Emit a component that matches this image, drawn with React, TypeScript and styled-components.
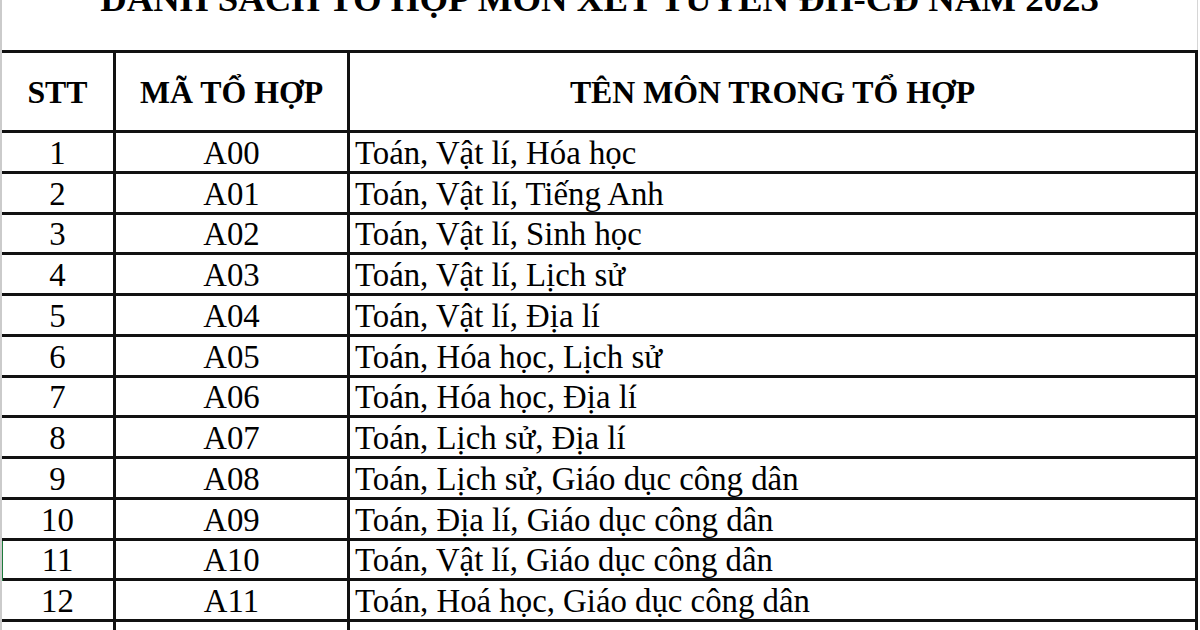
import React from 'react';
import styled, { createGlobalStyle } from 'styled-components';

const GlobalStyle = createGlobalStyle`
  html, body {
    margin: 0;
    padding: 0;
    background: #fff;
    overflow: hidden;
  }
  body {
    font-family: "Liberation Serif", "Times New Roman", "DejaVu Serif", serif;
    color: #000;
  }
`;

const Sheet = styled.div`
  position: relative;
  width: 1200px;
  height: 630px;
  overflow: hidden;
  box-sizing: border-box;
  border-left: 2px solid #cbcbcb;
  background: #fff;
`;

const TitleRow = styled.div`
  height: 50px;
  width: 1196px;
  overflow: hidden;
  box-sizing: border-box;
  border-right: 1px solid #d6d6d6;
`;

const Title = styled.h1`
  margin: -19px 0 0;
  font-size: 36.8px;
  line-height: 36px;
  font-weight: 700;
  text-align: center;
  white-space: nowrap;
`;

const Grid = styled.div`
  display: grid;
  grid-template-columns: 111px 231px 845px;
  grid-template-rows: 77px;
  grid-auto-rows: 37.75px;
  gap: 3px;
  width: 1196px;
  box-sizing: border-box;
  padding: 3px 3px 0 0;
  background: #111;
`;

const HeadCell = styled.div`
  display: flex;
  align-items: center;
  justify-content: center;
  padding-top: 2px;
  box-sizing: border-box;
  background: #fff;
  font-size: 31.8px;
  font-weight: 700;
  line-height: 1;
  white-space: nowrap;
`;

const Cell = styled.div<{ $align?: 'left' | 'center' }>`
  display: flex;
  align-items: center;
  justify-content: ${(p) => (p.$align === 'left' ? 'flex-start' : 'center')};
  padding-left: ${(p) => (p.$align === 'left' ? '5px' : '0')};
  padding-top: 3px;
  box-sizing: border-box;
  background: #fff;
  font-size: 32.8px;
  line-height: 1;
  white-space: nowrap;
`;

const SelectionMark = styled.div`
  position: absolute;
  left: -2px;
  top: 541px;
  width: 3px;
  height: 40px;
  background: #1e7b3c;
`;

const rows: [string, string][] = [
  ['A00', 'Toán, Vật lí, Hóa học'],
  ['A01', 'Toán, Vật lí, Tiếng Anh'],
  ['A02', 'Toán, Vật lí, Sinh học'],
  ['A03', 'Toán, Vật lí, Lịch sử'],
  ['A04', 'Toán, Vật lí, Địa lí'],
  ['A05', 'Toán, Hóa học, Lịch sử'],
  ['A06', 'Toán, Hóa học, Địa lí'],
  ['A07', 'Toán, Lịch sử, Địa lí'],
  ['A08', 'Toán, Lịch sử, Giáo dục công dân'],
  ['A09', 'Toán, Địa lí, Giáo dục công dân'],
  ['A10', 'Toán, Vật lí, Giáo dục công dân'],
  ['A11', 'Toán, Hoá học, Giáo dục công dân'],
];

const App: React.FC = () => {
  return (
    <>
      <GlobalStyle />
      <Sheet>
        <TitleRow>
          <Title>DANH SÁCH TỔ HỢP MÔN XÉT TUYỂN ĐH-CĐ NĂM 2023</Title>
        </TitleRow>
        <Grid>
          <HeadCell>STT</HeadCell>
          <HeadCell>MÃ TỔ HỢP</HeadCell>
          <HeadCell>TÊN MÔN TRONG TỔ HỢP</HeadCell>
          {rows.map(([code, subjects], i) => (
            <React.Fragment key={code}>
              <Cell>{i + 1}</Cell>
              <Cell>{code}</Cell>
              <Cell $align="left">{subjects}</Cell>
            </React.Fragment>
          ))}
          <Cell />
          <Cell />
          <Cell $align="left" />
        </Grid>
        <SelectionMark />
      </Sheet>
    </>
  );
};

export default App;
